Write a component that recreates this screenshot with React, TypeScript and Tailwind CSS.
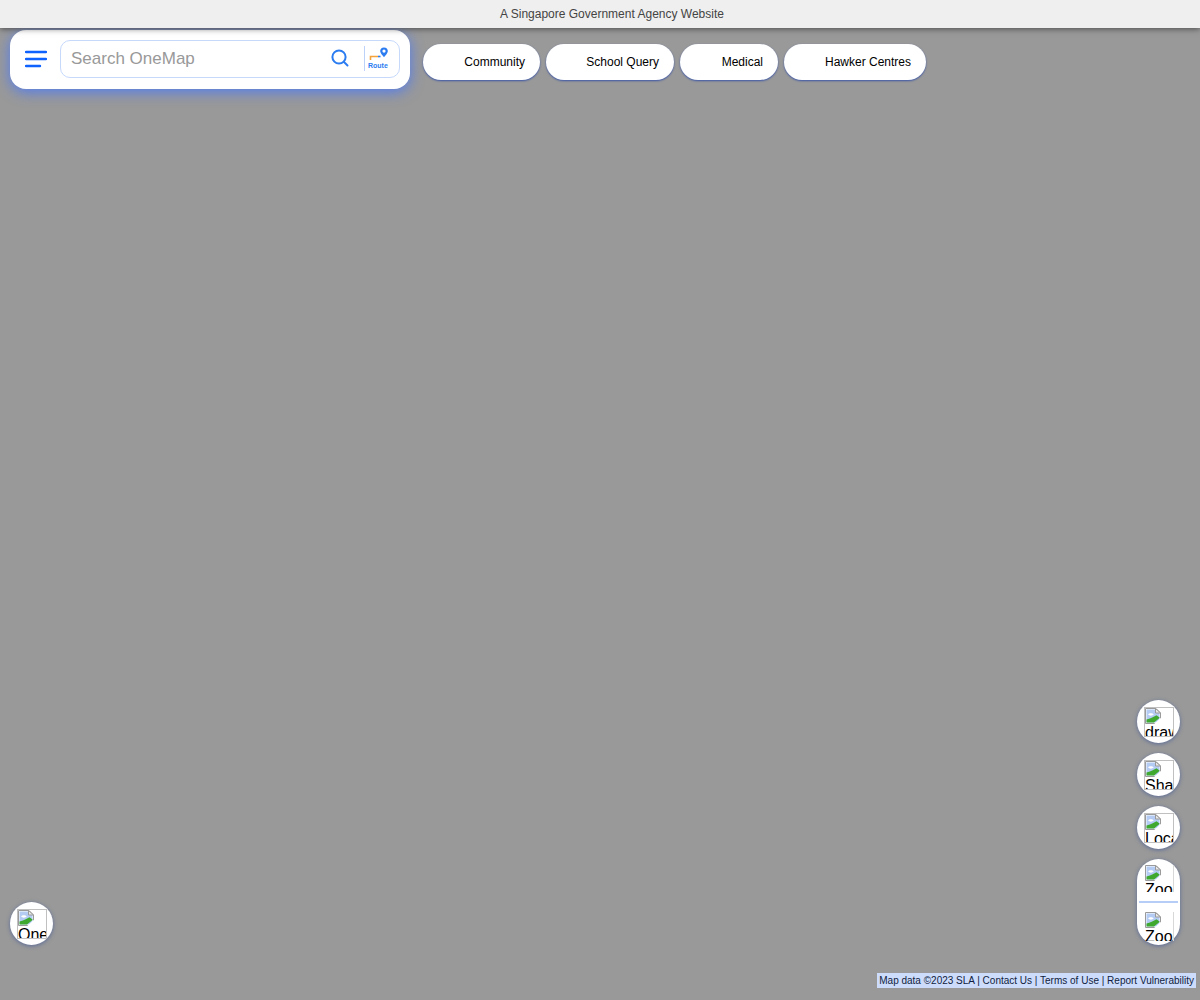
import React from "react";

const chips = [
  { label: "Community", width: "w-[117px]" },
  { label: "School Query", width: "w-[128px]" },
  { label: "Medical", width: "w-[98px]" },
  { label: "Hawker Centres", width: "w-[142px]" },
];

const BrokenGlyph = () => (
  <svg width="16" height="16" viewBox="0 0 16 16" className="block shrink-0">
    <path d="M0.5 0.5H11L15.5 5V15.5H0.5Z" fill="#ffffff" stroke="#9a9a9a" />
    <path d="M1.5 1.5H10.5L14.5 5.5V14.5H1.5Z" fill="#b4ccf4" />
    <path d="M10.5 0.5V5H15.5Z" fill="#e8e8e8" stroke="#9a9a9a" />
    <path d="M3 6.5C4.5 4.6 7.5 5 8.8 6.6C7 8 4.5 8 3 6.5Z" fill="#ffffff" />
    <path d="M1.5 14.5V11.5C5 10.8 8.5 8.8 11.5 7.2L14.5 9.5V10L9 14.5Z" fill="#3fa92f" />
    <path d="M16 9.8L9.2 16H16Z" fill="#ffffff" />
  </svg>
);

// the picture's map controls failed to load, so each one shows the broken image state
const BrokenImage = ({ alt, clipped, className = "" }: { alt: string; clipped?: boolean; className?: string }) => (
  <div
    className={`ml-[1px] w-[30px] overflow-hidden text-[16px] leading-[18px] text-black ${
      clipped ? "border-r border-[#d8d8d8] pl-[1px]" : "h-[30px] border border-[#c0c0c0]"
    } ${className}`}
  >
    <BrokenGlyph />
    <span className="block whitespace-nowrap">{alt}</span>
  </div>
);

const RoundButton = ({ alt }: { alt: string }) => (
  <div className="flex h-[43px] w-[43px] items-center justify-center rounded-full bg-white shadow-[0_1px_4px_rgba(38,70,150,0.55)]">
    <BrokenImage alt={alt} />
  </div>
);

export default function App() {
  return (
    <div className="flex h-[1000px] w-[1200px] flex-col overflow-hidden bg-[#999999] font-['Liberation_Sans',Arial,sans-serif]">
      <div className="relative z-10 flex h-7 shrink-0 items-center justify-center bg-[#efefef] pl-6 text-xs text-[#444444] shadow-[0_1px_6px_rgba(0,0,0,0.5)]">
        A Singapore Government Agency Website
      </div>

      <div className="flex items-start pl-[10px] pt-[2px]">
        <div className="flex h-[59px] w-[400px] items-center rounded-[16px] bg-white pl-[15px] pr-[10px] shadow-[0_3px_14px_rgba(70,120,255,0.85)]">
          <svg width="22" height="18" viewBox="0 0 22 18" className="mb-[1px] shrink-0">
            <path d="M1 2H21M1 9H21M1 16H15" stroke="#0f62fe" strokeWidth="2.4" strokeLinecap="round" />
          </svg>
          <div className="mb-[2px] ml-[13px] flex h-[38px] flex-1 items-center rounded-[10px] border border-[#c6d9fb] pl-[10px]">
            <span className="flex-1 text-[17px] text-[#999999]">Search OneMap</span>
            <svg width="18" height="18" viewBox="0 0 18 18" className="mb-[2px] mr-[15px] shrink-0" fill="none">
              <circle cx="8" cy="8" r="6.6" stroke="#2b7cf0" strokeWidth="2" />
              <path d="M13 13L16.5 16.5" stroke="#2b7cf0" strokeWidth="2" strokeLinecap="round" />
            </svg>
            <div className="flex h-[25px] w-[35px] flex-col items-start border-l border-[#bcd2f8] pl-[3px]">
              <svg width="22" height="16" viewBox="0 0 22 16" className="shrink-0" fill="none">
                <path d="M2.5 14V10.5H10" stroke="#f5a33b" strokeWidth="1.6" />
                <path d="M10 10.5H12.5" stroke="#2b7cf0" strokeWidth="1.6" />
                <path d="M16 1.5C13.6 1.5 12.2 3.2 12.2 5.1C12.2 7.6 16 11.2 16 11.2C16 11.2 19.8 7.6 19.8 5.1C19.8 3.2 18.4 1.5 16 1.5Z" fill="#2b7cf0" />
                <circle cx="16" cy="5.1" r="1.6" fill="#ffffff" />
              </svg>
              <span className="-mt-[1px] text-[7px] font-bold leading-[9px] text-[#2b7cf0]">Route</span>
            </div>
          </div>
        </div>

        <div className="ml-[13px] mt-[14px] flex gap-[6px]">
          {chips.map((chip) => (
            <div
              key={chip.label}
              className={`${chip.width} flex h-9 items-center justify-end rounded-full bg-white pr-[15px] text-xs text-black shadow-[0_1px_2px_rgba(38,70,170,0.8)]`}
            >
              {chip.label}
            </div>
          ))}
        </div>
      </div>

      <div className="mt-auto flex items-end justify-between pl-[10px] pr-5">
        <RoundButton alt="OneMap" />
        <div className="flex flex-col gap-[10px]">
          <RoundButton alt="draw" />
          <RoundButton alt="Share" />
          <RoundButton alt="Location" />
          <div className="flex h-[86px] w-[43px] flex-col items-center rounded-full bg-white shadow-[0_1px_4px_rgba(38,70,150,0.55)]">
            <div className="h-[42px] pt-[6px]">
              <BrokenImage alt="Zoom in" clipped className="h-[27px]" />
            </div>
            <div className="h-[2px] w-[39px] shrink-0 bg-[#b5cdf7]" />
            <div className="h-[42px] pt-[9px]">
              <BrokenImage alt="Zoom out" clipped className="h-[29px]" />
            </div>
          </div>
        </div>
      </div>

      <div className="mb-3 mt-7 flex justify-end pr-1">
        <div className="flex h-[15px] items-center bg-[#cddcfb] px-[2px] text-[10px] text-[#101c40]">
          Map data ©2023 SLA | Contact Us | Terms of Use | Report Vulnerability
        </div>
      </div>
    </div>
  );
}
